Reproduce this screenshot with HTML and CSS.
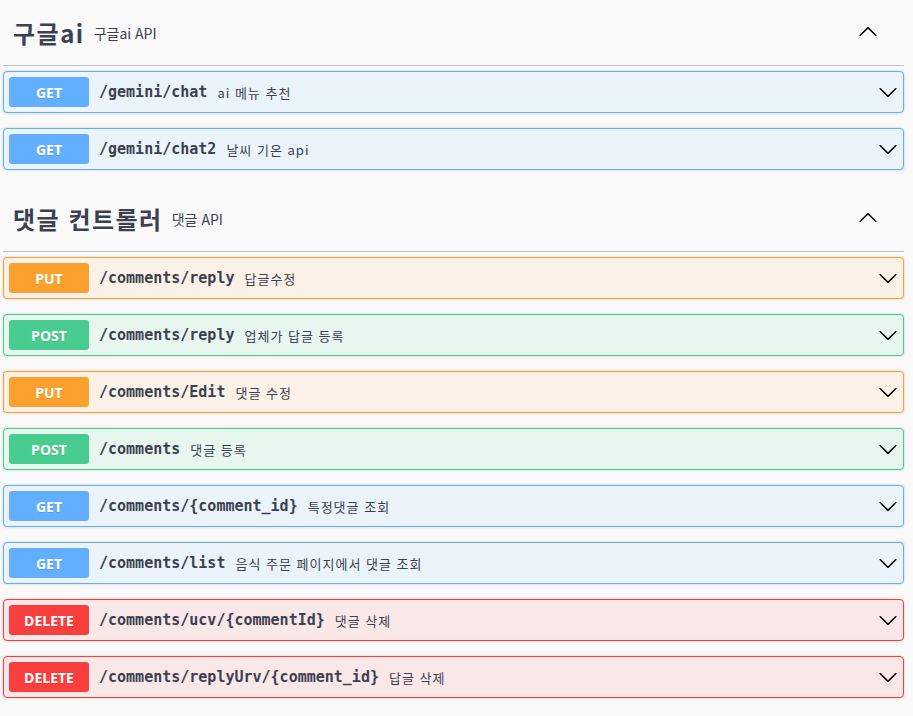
FILE: index.html
```html
<!DOCTYPE html>
<html lang="ko">
<head>
<meta charset="utf-8">
<title>Swagger UI</title>
<link rel="stylesheet" href="styles.css">
</head>
<body>
<div class="swagger">
  <section class="tag-section first">
    <h3 class="tag">
      <span class="tag-name">구글ai</span><small class="tag-desc">구글ai API</small>
      <svg class="arrow-up" viewBox="0 0 20 20" width="20" height="20"><path d="M17.418 14.908c.272.268.709.268.979 0s.271-.701 0-.969l-7.908-7.83c-.27-.268-.707-.268-.979 0l-7.908 7.83c-.27.268-.27.701 0 .969.271.268.709.268.979 0L10 7.767l7.418 7.141z"/></svg>
    </h3>
    <div class="opblock get"><span class="method">GET</span><span class="path">/gemini/chat</span><span class="desc">ai 메뉴 추천</span><svg class="arrow" viewBox="0 0 20 20" width="20" height="20"><path d="M17.418 6.109c.272-.268.709-.268.979 0s.271.701 0 .969l-7.908 7.83c-.27.268-.707.268-.979 0l-7.908-7.83c-.27-.268-.27-.701 0-.969.271-.268.709-.268.979 0L10 13.25l7.418-7.141z"/></svg></div>
    <div class="opblock get"><span class="method">GET</span><span class="path">/gemini/chat2</span><span class="desc">날씨 기온 api</span><svg class="arrow" viewBox="0 0 20 20" width="20" height="20"><path d="M17.418 6.109c.272-.268.709-.268.979 0s.271.701 0 .969l-7.908 7.83c-.27.268-.707.268-.979 0l-7.908-7.83c-.27-.268-.27-.701 0-.969.271-.268.709-.268.979 0L10 13.25l7.418-7.141z"/></svg></div>
  </section>
  <section class="tag-section">
    <h3 class="tag">
      <span class="tag-name">댓글 컨트롤러</span><small class="tag-desc">댓글 API</small>
      <svg class="arrow-up" viewBox="0 0 20 20" width="20" height="20"><path d="M17.418 14.908c.272.268.709.268.979 0s.271-.701 0-.969l-7.908-7.83c-.27-.268-.707-.268-.979 0l-7.908 7.83c-.27.268-.27.701 0 .969.271.268.709.268.979 0L10 7.767l7.418 7.141z"/></svg>
    </h3>
    <div class="opblock put"><span class="method">PUT</span><span class="path">/comments/reply</span><span class="desc">답글수정</span><svg class="arrow" viewBox="0 0 20 20" width="20" height="20"><path d="M17.418 6.109c.272-.268.709-.268.979 0s.271.701 0 .969l-7.908 7.83c-.27.268-.707.268-.979 0l-7.908-7.83c-.27-.268-.27-.701 0-.969.271-.268.709-.268.979 0L10 13.25l7.418-7.141z"/></svg></div>
    <div class="opblock post"><span class="method">POST</span><span class="path">/comments/reply</span><span class="desc">업체가 답글 등록</span><svg class="arrow" viewBox="0 0 20 20" width="20" height="20"><path d="M17.418 6.109c.272-.268.709-.268.979 0s.271.701 0 .969l-7.908 7.83c-.27.268-.707.268-.979 0l-7.908-7.83c-.27-.268-.27-.701 0-.969.271-.268.709-.268.979 0L10 13.25l7.418-7.141z"/></svg></div>
    <div class="opblock put"><span class="method">PUT</span><span class="path">/comments/Edit</span><span class="desc">댓글 수정</span><svg class="arrow" viewBox="0 0 20 20" width="20" height="20"><path d="M17.418 6.109c.272-.268.709-.268.979 0s.271.701 0 .969l-7.908 7.83c-.27.268-.707.268-.979 0l-7.908-7.83c-.27-.268-.27-.701 0-.969.271-.268.709-.268.979 0L10 13.25l7.418-7.141z"/></svg></div>
    <div class="opblock post"><span class="method">POST</span><span class="path">/comments</span><span class="desc">댓글 등록</span><svg class="arrow" viewBox="0 0 20 20" width="20" height="20"><path d="M17.418 6.109c.272-.268.709-.268.979 0s.271.701 0 .969l-7.908 7.83c-.27.268-.707.268-.979 0l-7.908-7.83c-.27-.268-.27-.701 0-.969.271-.268.709-.268.979 0L10 13.25l7.418-7.141z"/></svg></div>
    <div class="opblock get"><span class="method">GET</span><span class="path">/comments/{comment_id}</span><span class="desc">특정댓글 조회</span><svg class="arrow" viewBox="0 0 20 20" width="20" height="20"><path d="M17.418 6.109c.272-.268.709-.268.979 0s.271.701 0 .969l-7.908 7.83c-.27.268-.707.268-.979 0l-7.908-7.83c-.27-.268-.27-.701 0-.969.271-.268.709-.268.979 0L10 13.25l7.418-7.141z"/></svg></div>
    <div class="opblock get"><span class="method">GET</span><span class="path">/comments/list</span><span class="desc">음식 주문 페이지에서 댓글 조회</span><svg class="arrow" viewBox="0 0 20 20" width="20" height="20"><path d="M17.418 6.109c.272-.268.709-.268.979 0s.271.701 0 .969l-7.908 7.83c-.27.268-.707.268-.979 0l-7.908-7.83c-.27-.268-.27-.701 0-.969.271-.268.709-.268.979 0L10 13.25l7.418-7.141z"/></svg></div>
    <div class="opblock delete"><span class="method">DELETE</span><span class="path">/comments/ucv/{commentId}</span><span class="desc">댓글 삭제</span><svg class="arrow" viewBox="0 0 20 20" width="20" height="20"><path d="M17.418 6.109c.272-.268.709-.268.979 0s.271.701 0 .969l-7.908 7.83c-.27.268-.707.268-.979 0l-7.908-7.83c-.27-.268-.27-.701 0-.969.271-.268.709-.268.979 0L10 13.25l7.418-7.141z"/></svg></div>
    <div class="opblock delete"><span class="method">DELETE</span><span class="path">/comments/replyUrv/{comment_id}</span><span class="desc">답글 삭제</span><svg class="arrow" viewBox="0 0 20 20" width="20" height="20"><path d="M17.418 6.109c.272-.268.709-.268.979 0s.271.701 0 .969l-7.908 7.83c-.27.268-.707.268-.979 0l-7.908-7.83c-.27-.268-.27-.701 0-.969.271-.268.709-.268.979 0L10 13.25l7.418-7.141z"/></svg></div>
  </section>
</div>
</body>
</html>
```

FILE: styles.css
```css
html, body {
  margin: 0;
  padding: 0;
  background: #fafafa;
}

body {
  font-family: "Liberation Sans", "Noto Sans CJK KR", sans-serif;
  color: #3b4151;
  overflow: hidden;
}

.swagger {
  margin: -1px 9px 0 3px;
}

.tag-section {
  display: flex;
  flex-direction: column;
}

.tag {
  box-sizing: border-box;
  height: 67px;
  margin: 0 0 5px;
  padding: 0 26px 0 10px;
  display: flex;
  align-items: center;
  border-bottom: 1px solid rgba(59, 65, 81, 0.3);
  font-weight: normal;
}

.tag-name {
  font-family: "Noto Sans CJK KR", "Liberation Sans", sans-serif;
  font-size: 24px;
  font-weight: 700;
  color: #3b4151;
  letter-spacing: 1.5px;
}

.tag-desc {
  font-family: "Noto Sans CJK KR", sans-serif;
  font-size: 14px;
  font-weight: 400;
  padding: 0 10px 0 9px;
  color: #3b4151;
  flex: 1;
  margin-top: 1px;
}

.arrow-up {
  fill: #000;
  margin-top: -2px;
}

.opblock {
  box-sizing: border-box;
  height: 42px;
  margin: 0 0 15px;
  padding: 5px;
  border: 1px solid;
  border-radius: 4px;
  box-shadow: 0 0 3px rgba(0, 0, 0, 0.19);
  display: flex;
  align-items: center;
}

.method {
  box-sizing: border-box;
  width: 80px;
  height: 30px;
  border-radius: 3px;
  display: flex;
  align-items: center;
  justify-content: center;
  color: #fff;
  font-family: "Open Sans", "Liberation Sans", sans-serif;
  font-size: 14px;
  font-weight: 700;
  text-shadow: 0 1px 0 rgba(0, 0, 0, 0.1);
  flex: none;
}

.path {
  font-family: "DejaVu Sans Mono", "Liberation Mono", monospace;
  font-size: 15px;
  font-weight: 600;
  color: #3b4151;
  padding: 0 10px;
  flex: none;
}

.desc {
  font-family: "Noto Sans CJK KR", sans-serif;
  font-size: 13px;
  letter-spacing: 1px;
  color: #3b4151;
  flex: 1;
}

.arrow {
  fill: #000;
  flex: none;
}

.get { background: #ebf3fb; border-color: #61affe; }
.get .method { background: #61affe; }

.post { background: #e8f6f0; border-color: #49cc90; }
.post .method { background: #49cc90; }

.put { background: #fbf1e6; border-color: #fca130; }
.put .method { background: #fca130; }

.delete { background: #fae7e7; border-color: #f93e3e; }
.delete .method { background: #f93e3e; }
```
